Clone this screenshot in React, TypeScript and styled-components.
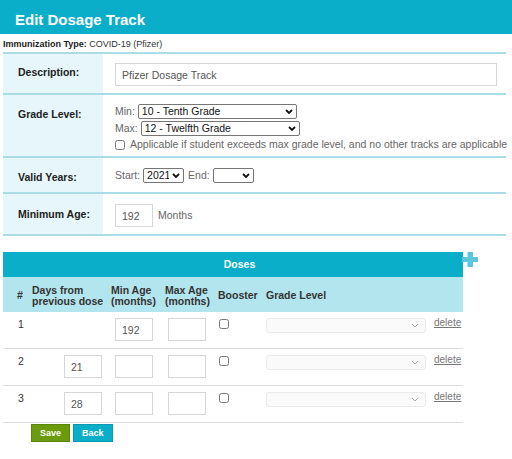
import React from 'react';
import styled, { createGlobalStyle } from 'styled-components';

const GlobalStyle = createGlobalStyle`
  body {
    margin: 0;
    background: #fff;
    font-family: 'Liberation Sans', Arial, sans-serif;
    color: #222;
  }
`;

const TEAL = '#0aaec8';

const doses = [
  { n: 1, days: null as string | null, min: '192' },
  { n: 2, days: '21', min: '' },
  { n: 3, days: '28', min: '' },
];

// select with a drawn chevron so narrow boxes keep their text
const Dropdown: React.FC<{ w: number; value: string; label: string; disabled?: boolean }> = ({ w, value, label, disabled }) => (
  <SelectWrap $w={w}>
    <SelectBox $disabled={!!disabled} disabled={disabled} defaultValue={value}>
      <option value={value}>{label}</option>
    </SelectBox>
    <Chevron $disabled={!!disabled} width="8" height="5" viewBox="0 0 8 5">
      <path d="M1 1 L4 4 L7 1" fill="none" />
    </Chevron>
  </SelectWrap>
);

const App: React.FC = () => {
  return (
    <Page>
      <GlobalStyle />
      <TitleBar>Edit Dosage Track</TitleBar>
      <TypeLine>
        <b>Immunization Type:</b> COVID-19 (Pfizer)
      </TypeLine>

      <Form>
        <FormRow $h={39}>
          <Label $top={12}>Description:</Label>
          <Value $top={9}>
            <TextInput $w={382} defaultValue="Pfizer Dosage Track" />
          </Value>
        </FormRow>

        <FormRow $h={61}>
          <Label $top={13}>Grade Level:</Label>
          <Value $top={9}>
            <Line>
              <Hint>Min:</Hint>
              <Dropdown w={159} value="10" label="10 - Tenth Grade" />
            </Line>
            <Line>
              <Hint>Max:</Hint>
              <Dropdown w={159} value="12" label="12 - Twelfth Grade" />
            </Line>
            <Line>
              <Check type="checkbox" />
              <Hint>Applicable if student exceeds max grade level, and no other tracks are applicable</Hint>
            </Line>
          </Value>
        </FormRow>

        <FormRow $h={34}>
          <Label $top={13}>Valid Years:</Label>
          <Value $top={10}>
            <Line>
              <Hint>Start:</Hint>
              <Dropdown w={41} value="2021" label="2021" />
              <Hint $gap={1}>End:</Hint>
              <Dropdown w={41} value="" label="" />
            </Line>
          </Value>
        </FormRow>

        <FormRow $h={40}>
          <Label $top={14}>Minimum Age:</Label>
          <Value $top={10}>
            <Line>
              <TextInput $w={38} defaultValue="192" />
              <Hint $gap={2}>Months</Hint>
            </Line>
          </Value>
        </FormRow>
      </Form>

      <Doses>
        <DosesTitle>
          Doses
          <AddButton title="Add dose">
            <svg width="16" height="15" viewBox="0 0 16 15">
              <rect x="5.5" y="0" width="5.5" height="15" fill="#5cc6dd" />
              <rect x="0" y="5" width="16" height="5" fill="#5cc6dd" />
            </svg>
          </AddButton>
        </DosesTitle>

        <HeadRow>
          <HeadCell $pad={14}>#</HeadCell>
          <HeadCell $pad={2}>Days from<br />previous dose</HeadCell>
          <HeadCell $pad={3}>Min Age<br />(months)</HeadCell>
          <HeadCell $pad={3}>Max Age<br />(months)</HeadCell>
          <HeadCell $pad={4}>Booster</HeadCell>
          <HeadCell $pad={4}>Grade Level</HeadCell>
          <HeadCell $pad={4} />
        </HeadRow>

        {doses.map(d => (
          <DoseRow key={d.n}>
            <NumCell>{d.n}</NumCell>
            <Cell $pad={34}>{d.days !== null && <TextInput $w={38} defaultValue={d.days} />}</Cell>
            <Cell $pad={7}><TextInput $w={38} defaultValue={d.min} /></Cell>
            <Cell $pad={6}><TextInput $w={38} /></Cell>
            <Cell $pad={5} $top={7}><Check type="checkbox" /></Cell>
            <Cell $pad={4}>
              <Dropdown w={160} value="" label="" disabled />
            </Cell>
            <Cell $pad={4} $top={4}><DeleteLink href="#">delete</DeleteLink></Cell>
          </DoseRow>
        ))}
      </Doses>

      <Buttons>
        <Btn $bg="#6b9b0c" $edge="#5a8608">Save</Btn>
        <Btn $bg={TEAL} $edge="#079ab2">Back</Btn>
      </Buttons>
    </Page>
  );
};

export default App;

const Page = styled.div`
  width: 512px;
  height: 459px;
  overflow: hidden;
`;

const TitleBar = styled.div`
  height: 34px;
  box-sizing: border-box;
  padding: 11px 0 0 15px;
  background: ${TEAL};
  color: #fff;
  font-size: 15px;
  line-height: 17px;
  font-weight: 700;
`;

const TypeLine = styled.div`
  padding: 5px 3px 2px;
  font-size: 9px;
  line-height: 11px;
  color: #333;
  b {
    font-weight: 700;
    color: #222;
  }
`;

const Form = styled.div`
  margin: 0 6px 0 3px;
  border-top: 2px solid #a9dce5;
`;

const FormRow = styled.div<{ $h: number }>`
  display: grid;
  grid-template-columns: 100px 1fr;
  height: ${p => p.$h}px;
  border-bottom: 2px solid #a9dce5;
`;

const Label = styled.div<{ $top: number }>`
  background: #e6f6fa;
  padding: ${p => p.$top}px 0 0 15px;
  font-size: 10.5px;
  line-height: 13px;
  font-weight: 700;
  color: #222;
`;

const Value = styled.div<{ $top: number }>`
  padding: ${p => p.$top}px 8px 0 12px;
  display: flex;
  flex-direction: column;
  gap: 2px;
  min-width: 0;
`;

const Line = styled.div`
  display: flex;
  align-items: center;
  gap: 3px;
  white-space: nowrap;
`;

const Hint = styled.span<{ $gap?: number }>`
  font-size: 10.5px;
  line-height: 13px;
  color: #666;
  margin-left: ${p => p.$gap ?? 0}px;
`;

const TextInput = styled.input<{ $w: number }>`
  width: ${p => p.$w}px;
  height: 23px;
  box-sizing: border-box;
  margin: 0;
  padding: 0 6px;
  border: 1px solid #d6d6d6;
  background: #fff;
  font-family: 'Liberation Sans', Arial, sans-serif;
  font-size: 10.5px;
  color: #555;
  outline: none;
`;

const SelectWrap = styled.span<{ $w: number }>`
  position: relative;
  display: inline-block;
  width: ${p => p.$w}px;
  height: 15px;
`;

const SelectBox = styled.select<{ $disabled: boolean }>`
  appearance: none;
  display: block;
  width: 100%;
  height: 100%;
  box-sizing: border-box;
  margin: 0;
  padding: 0 14px 0 3px;
  border: 1px solid ${p => (p.$disabled ? '#e2e2e2' : '#767676')};
  border-radius: ${p => (p.$disabled ? 3 : 2)}px;
  background: ${p => (p.$disabled ? '#f9f9f9' : '#fff')};
  font-family: 'Liberation Sans', Arial, sans-serif;
  font-size: 10.5px;
  line-height: 13px;
  color: #111;
`;

const Chevron = styled.svg<{ $disabled: boolean }>`
  position: absolute;
  top: 5px;
  right: ${p => (p.$disabled ? 7 : 4)}px;
  pointer-events: none;
  path {
    stroke: ${p => (p.$disabled ? '#aaa' : '#111')};
    stroke-width: ${p => (p.$disabled ? 1 : 1.8)};
  }
`;

const Check = styled.input`
  width: 10px;
  height: 10px;
  margin: 0 2px 0 0;
`;

const Doses = styled.div`
  width: 460px;
  margin: 16px 0 0 3px;
`;

const DosesTitle = styled.div`
  position: relative;
  height: 25px;
  box-sizing: border-box;
  padding: 6px 0 0 13px;
  background: ${TEAL};
  color: #fff;
  text-align: center;
  font-size: 10.5px;
  line-height: 13px;
  font-weight: 700;
`;

const AddButton = styled.span`
  position: absolute;
  left: 459px;
  top: 0;
  display: block;
  width: 16px;
  height: 15px;
  cursor: pointer;
  svg {
    display: block;
  }
`;

const columns = '27px 78px 54px 52px 48px 168px 33px';

const HeadRow = styled.div`
  display: grid;
  grid-template-columns: ${columns};
  height: 35px;
  background: #b3e5ee;
`;

const HeadCell = styled.div<{ $pad: number }>`
  display: flex;
  align-items: center;
  padding: 2px 0 0 ${p => p.$pad}px;
  font-size: 10.5px;
  line-height: 11px;
  font-weight: 700;
  color: #333;
  white-space: nowrap;
`;

const DoseRow = styled.div`
  display: grid;
  grid-template-columns: ${columns};
  height: 36px;
  border-bottom: 1px solid #dcdcdc;
`;

const Cell = styled.div<{ $pad: number; $top?: number }>`
  padding: ${p => p.$top ?? 6}px 0 0 ${p => p.$pad}px;
  display: flex;
  align-items: flex-start;
`;

const NumCell = styled.div`
  padding: 6px 0 0 15px;
  font-size: 10.5px;
  line-height: 13px;
  color: #333;
`;

const DeleteLink = styled.a`
  font-size: 10px;
  line-height: 13px;
  color: #777;
  text-decoration: underline;
`;

const Buttons = styled.div`
  display: flex;
  gap: 3px;
  padding: 1px 0 0 31px;
`;

const Btn = styled.button<{ $bg: string; $edge: string }>`
  height: 18px;
  min-width: 39px;
  padding: 0 8px;
  margin: 0;
  border: 1px solid ${p => p.$edge};
  background: ${p => p.$bg};
  color: #fff;
  font-family: 'Liberation Sans', Arial, sans-serif;
  font-size: 9px;
  font-weight: 700;
  cursor: pointer;
`;
